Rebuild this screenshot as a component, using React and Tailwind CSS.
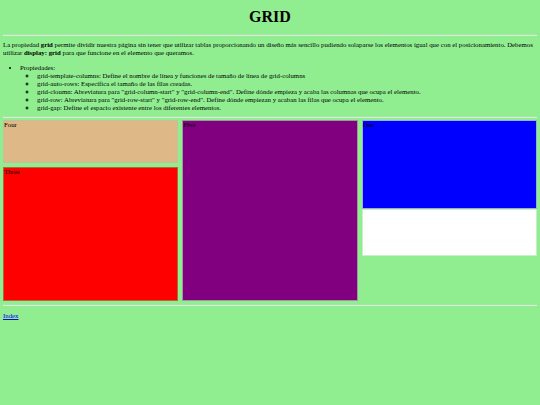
import React from "react";

const items = [
  "grid-template-columns: Define el nombre de línea y funciones de tamaño de línea de grid-columns",
  "grid-auto-rows: Especifica el tamaño de las filas creadas.",
  'grid-cloumn: Abreviatura para "grid-column-start" y "grid-column-end". Define dónde empieza y acaba las columnas que ocupa el elemento.',
  'grid-row: Abreviatura para "grid-row-start" y "grid-row-end". Define dónde empiezan y acaban las filas que ocupa el elemento.',
  "grid-gap: Define el espacio existente entre los diferentes elementos.",
];

const Hr = () => <div className="h-[2px] border-t border-[#b4dcb4] border-b border-b-[#c8f8c8]" />;

const App = () => {
  return (
    <div className="min-h-[405px] bg-[#90ee90] px-[3px] text-black text-[6.8px] leading-[8.3px] font-['Liberation_Serif',serif]">
      <h1 className="pt-[9px] pb-[9px] text-center text-[16px] leading-[16px] font-bold">GRID</h1>
      <Hr />

      <p className="mt-[5px]">
        La propiedad <b>grid</b> permite dividir nuestra página sin tener que utilizar tablas proporcionando un diseño más sencillo pudiendo solaparse los elementos igual que con el posicionamiento. Debemos utilizar <b>display: grid</b> para que funcione en el elemento que queramos.
      </p>

      <ul className="mt-[6px] pl-[17px] list-disc leading-[8px]">
        <li>
          Propiedades:
          <ul className="pl-[17px] [list-style-type:circle]">
            {items.map((t) => (
              <li key={t}>{t}</li>
            ))}
          </ul>
        </li>
      </ul>

      <div className="mt-[4px]">
        <Hr />
      </div>

      <div className="mt-[2px] grid grid-cols-3 gap-[4px] h-[181px]">
        <div className="flex flex-col gap-[4px]">
          <div className="h-[43px] bg-[#deb887] border border-[#c6c09a]">Four</div>
          <div className="flex-1 bg-[#ff0000] border border-[#b06a3a]">Three</div>
        </div>
        <div className="bg-[#800080] border border-[#9a9a9a]">Five</div>
        <div className="flex flex-col">
          <div className="h-[89px] bg-[#0000ff] border border-[#9ab0c8]">One</div>
          <div className="h-[47px] bg-white border border-[#c8f0c8]"></div>
        </div>
      </div>

      <div className="mt-[3px]">
        <Hr />
      </div>

      <a href="#" className="block mt-[6px] text-[#0000ee] underline">Index</a>
    </div>
  );
};

export default App;
